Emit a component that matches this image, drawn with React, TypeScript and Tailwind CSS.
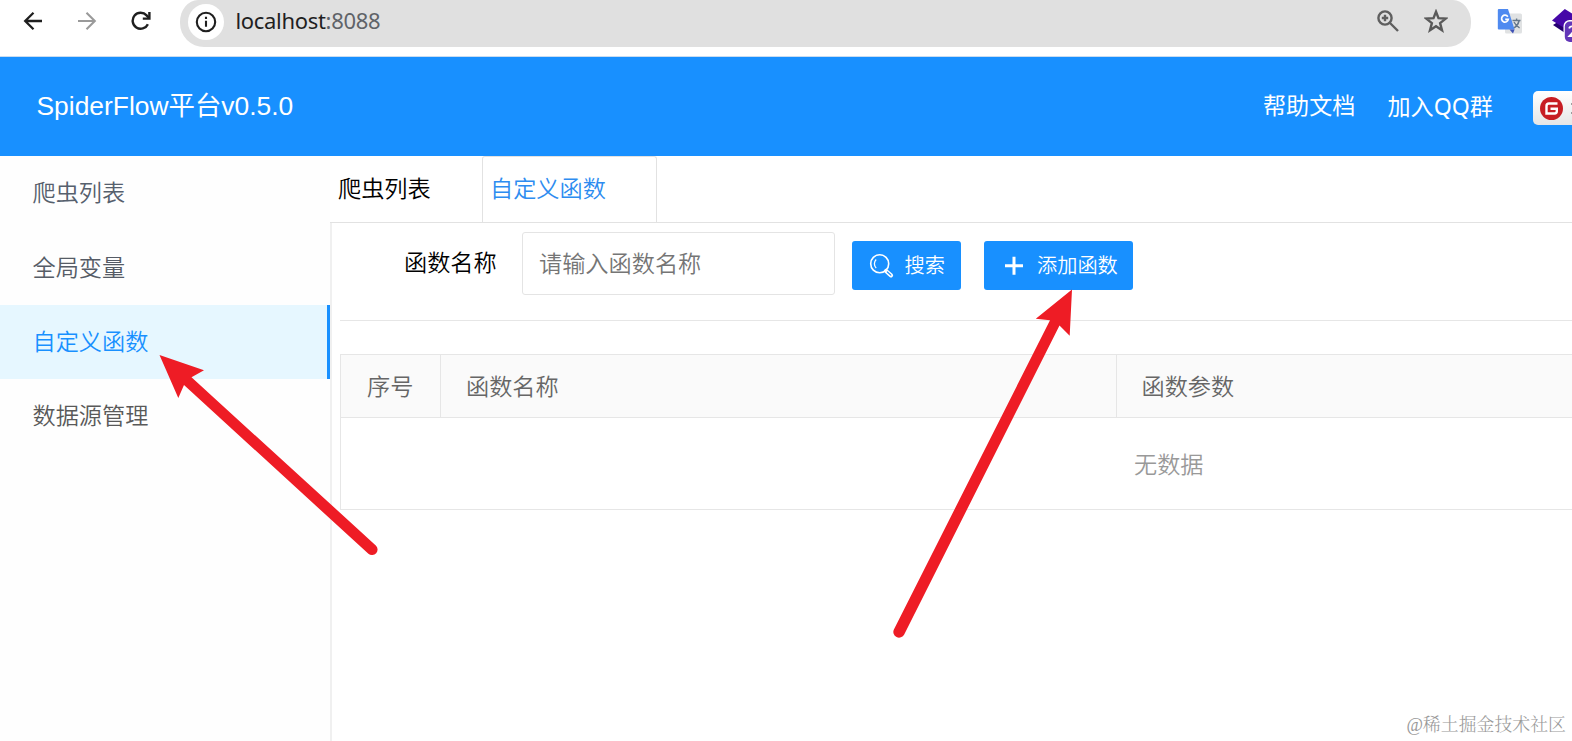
import React from "react";

const menu = [
  { label: "爬虫列表", color: "text-[#56606d]" },
  { label: "全局变量", color: "text-[#565c66]" },
  { label: "自定义函数", active: true, color: "text-[#1890ff]" },
  { label: "数据源管理", color: "text-[#595959]" },
];

function BrowserBar() {
  return (
    <div className="flex h-[57px] shrink-0 border-b border-[#c9dcf0] bg-white">
      <div className="flex h-[42px] w-[180px] shrink-0 items-center">
        <svg className="ml-[23px] h-5 w-5 shrink-0" viewBox="0 0 20 20" fill="none" stroke="#1f1f1f" strokeWidth="2.3">
          <path d="M19 10H2.5M10.5 1.8L2.2 10L10.5 18.2" />
        </svg>
        <svg className="ml-[34px] h-5 w-5 shrink-0" viewBox="0 0 20 20" fill="none" stroke="#9a9a9a" strokeWidth="2.1">
          <path d="M1 10H17.5M9.5 1.8L17.8 10L9.5 18.2" />
        </svg>
        <svg className="ml-[34px] h-5 w-5 shrink-0" viewBox="0 0 20 20" fill="none" stroke="#1f1f1f" strokeWidth="2.4">
          <path d="M16.9 13.2A8 8 0 1 1 15.6 4.4L18 7" />
          <path d="M18.4 1V7.6H11.8" />
        </svg>
      </div>
      <div className="flex h-[47px] w-[1291px] shrink-0 items-start rounded-b-[24px] bg-[#e0e0e0] [border-top-left-radius:18px_22px] [border-top-right-radius:18px_22px]">
        <div className="ml-[7.5px] mt-[4px] flex h-[36px] w-[36px] items-center justify-center rounded-full bg-white">
          <svg className="h-[22px] w-[22px]" viewBox="0 0 22 22" fill="none" stroke="#1f1f1f" strokeWidth="2.1">
            <circle cx="11" cy="11" r="9.2" />
            <path d="M11 9.8V15.8M11 5.8V8.1" />
          </svg>
        </div>
        <div className="ml-[12px] mt-[4px] whitespace-nowrap font-['Noto_Sans','Open_Sans',sans-serif] text-[22px] leading-[32px] tracking-[-0.32px] text-[#1f1f1f]">
          localhost<span className="text-[#5f6368]">:8088</span>
        </div>
        <svg className="ml-auto mt-[10px] h-[22px] w-[22px]" viewBox="0 0 22 22" fill="none" stroke="#5f5f5f" strokeWidth="2.4">
          <circle cx="8" cy="8" r="6.6" />
          <path d="M13 13L21 21M4.8 8H11.2M8 4.8V11.2" />
        </svg>
        <svg className="ml-[25px] mr-[23.5px] mt-[9px] h-6 w-6" viewBox="0 0 24 24" fill="none" stroke="#5a5a5a" strokeWidth="2.4">
          <path d="M12 2.8L14.5 9.2L21.7 9.6L16.1 14.1L18 21.2L12 17.2L6 21.2L7.9 14.1L2.3 9.6L9.5 9.2Z" />
        </svg>
      </div>
      <svg className="ml-[26px] mt-[9px] h-[26px] w-[26px] shrink-0" viewBox="0 0 26 26">
        <rect x="8" y="4.5" width="17" height="20" rx="1.5" fill="#e0e2e3" />
        <path d="M1.8 0H11L17.6 20.5H1.8Q.8 20.5.8 19.5V1Q.8 0 1.8 0Z" fill="#4f8af0" />
        <path d="M12.5 20.5H17.6L16 24.5Z" fill="#3f51b5" />
        <path d="M10.8 7.7A3.4 3.4 0 1 0 11.3 10.4H8.2" fill="none" stroke="#fff" strokeWidth="1.7" />
        <path d="M15.5 11.5H23.5M19.6 9.5V11.5M17 13Q19 17 22.6 18.8M22 12Q21 16.5 17 19" fill="none" stroke="#66788a" strokeWidth="1.4" />
      </svg>
      <svg className="ml-[29px] mt-[9px] h-[34px] w-[20px] shrink-0" viewBox="0 0 20 34">
        <path d="M1 16L12 9L20 13V24H13Z" fill="#250070" />
        <path d="M0 11.5L12.8 0L20 4.5V20H14Z" fill="#4608a8" />
        <rect x="11.5" y="11" width="24" height="23" rx="6" fill="#fff" />
        <rect x="12.8" y="12.5" width="24" height="20.5" rx="5" fill="#6236b8" />
        <path d="M17.2 19.5Q17.6 17.4 20 17.4Q22.5 17.4 22.5 20Q22 22.5 17.5 27H23" fill="none" stroke="#fff" strokeWidth="1.8" />
      </svg>
    </div>
  );
}

function Header() {
  return (
    <header className="flex h-[99px] shrink-0 items-center whitespace-nowrap bg-[#1890ff] text-white">
      <div className="mb-[2px] ml-[36.5px] w-[1226.5px] shrink-0 text-[26.4px] leading-[40px]">SpiderFlow平台v0.5.0</div>
      <a className="w-[124.5px] shrink-0 text-[23.1px]">帮助文档</a>
      <a className="mb-[2px] w-[145.5px] shrink-0 font-['Noto_Sans','Noto_Sans_CJK_SC',sans-serif] text-[23.1px] leading-[32px]">加入QQ群</a>
      <div className="mt-[3px] flex h-[34px] w-[39px] shrink-0 items-center overflow-hidden rounded-l-[5px] bg-[#f3f3f3] bg-linear-to-b from-white to-[#e6e6e6]">
        <svg className="ml-[6.5px] h-[23px] w-[23px] shrink-0" viewBox="0 0 23 23">
          <circle cx="11.5" cy="11.5" r="11.5" fill="#c71d23" />
          <path d="M17.5 6.5H9Q6.5 6.5 6.5 9V16.5H14.5Q16.8 16.5 16.8 14.3V11.8H10.5" fill="none" stroke="#fff" strokeWidth="2.4" />
        </svg>
        <svg className="ml-[7px] h-[16px] w-[3px] shrink-0" viewBox="0 0 3 16" fill="none" stroke="#666" strokeWidth="1.6">
          <path d="M1.2 4H3M1.2 13H3" />
        </svg>
      </div>
    </header>
  );
}

export default function App() {
  return (
    <div className="relative flex h-[741px] w-[1572px] flex-col overflow-hidden bg-white font-['Liberation_Sans','Noto_Sans_CJK_SC',sans-serif]">
      <BrowserBar />
      <Header />
      <div className="flex min-h-0 flex-1">
        <aside className="flex w-[330px] shrink-0 flex-col bg-[#fefefe]">
          {menu.map((m) => (
            <div
              key={m.label}
              className={`flex h-[74.3px] items-center pl-[32.5px] pt-[1px] text-[23.2px] font-[350] ${m.color} ${
                m.active ? "border-r-[3px] border-[#1890ff] bg-[#e6f7ff]" : ""
              }`}
            >
              {m.label}
            </div>
          ))}
        </aside>
        <main className="flex min-w-0 flex-1 flex-col font-[350]">
          <div className="flex h-[67px] shrink-0 border-b border-[#e2e2e2] text-[23.2px] leading-[67px]">
            <div className="w-[152px] pl-[8px] text-black">爬虫列表</div>
            <div className="w-[175px] rounded-t-[3px] border border-b-0 border-[#e2e2e2] pl-[7px] leading-[65px] text-[#2d8cf0]">自定义函数</div>
          </div>
          <div className="flex min-h-0 flex-1 flex-col border-l-2 border-[#f0f0f0] pl-[8px]">
            <div className="flex h-[98px] shrink-0 items-start border-b border-[#e6e6e6] pt-[9px]">
              <label className="ml-[64px] w-[118px] text-[23.2px] leading-[63px] text-black">函数名称</label>
              <div className="h-[63px] w-[313px] rounded-[3px] border border-[#e4e4e4] pl-[16px] text-[23.2px] leading-[62px] text-[#757575]">
                请输入函数名称
              </div>
              <button className="ml-[17px] mt-[9px] flex h-[49px] w-[109px] items-center rounded-[3px] bg-[#1890ff] pt-px text-[20.2px] font-[350] text-white">
                <svg className="ml-[17px] mr-[10.5px] h-[25px] w-[25px]" viewBox="0 0 25 25" fill="none" stroke="#fff">
                  <circle cx="10.7" cy="9.8" r="9" strokeWidth="1.6" />
                  <path d="M7.2 5.5A6 6 0 0 0 7.2 14.1" strokeWidth="1.3" />
                  <path d="M17 17L22 21.3" strokeWidth="4.2" strokeLinecap="round" />
                  <path d="M18.4 18L21.8 21.1" stroke="#1890ff" strokeWidth="1.2" strokeLinecap="round" />
                </svg>
                搜索
              </button>
              <button className="ml-[23px] mt-[9px] flex h-[49px] w-[149px] items-center rounded-[3px] bg-[#1890ff] pt-px text-[20.2px] font-[350] text-white">
                <svg className="ml-[20px] mr-[13px] h-[20px] w-[20px]" viewBox="0 0 20 20" fill="none" stroke="#fff" strokeWidth="3">
                  <path d="M1 9.7H19M10 .7V18.7" />
                </svg>
                添加函数
              </button>
            </div>
            <div className="mt-[33px] flex shrink-0 flex-col border-y border-l border-[#e6e6e6] text-[23.2px] text-[#666]">
              <div className="flex h-[63px] border-b border-[#e6e6e6] bg-[#fafafa] leading-[65px]">
                <div className="w-[100px] shrink-0 border-r border-[#e6e6e6] pl-[26px]">序号</div>
                <div className="w-[676px] shrink-0 border-r border-[#e6e6e6] pl-[25px]">函数名称</div>
                <div className="pl-[24.5px]">函数参数</div>
              </div>
              <div className="h-[91px] pl-[793px] leading-[94px] text-[#999]">无数据</div>
            </div>
          </div>
        </main>
      </div>
      <div className="absolute bottom-[3px] right-[6px] whitespace-nowrap font-['Liberation_Serif','Noto_Serif_CJK_SC','Noto_Sans_CJK_SC',serif] text-[17.9px] font-light leading-[26px] text-[#999]">
        @稀土掘金技术社区
      </div>
      <svg className="pointer-events-none absolute inset-0 h-[741px] w-[1572px]" viewBox="0 0 1572 741" fill="#ee1c25">
        <path d="M159.5 355L204 370.3L191.5 377.3L375.8 545.4A5.6 5.6 0 0 1 368.4 553.8L184 385L178.3 398Z" />
        <path d="M1072 289.5L1069.7 335.7L1059.5 325.5L904.2 634.4A5.6 5.6 0 0 1 893.9 629.4L1050 320.3L1035.8 318.8Z" />
      </svg>
    </div>
  );
}
